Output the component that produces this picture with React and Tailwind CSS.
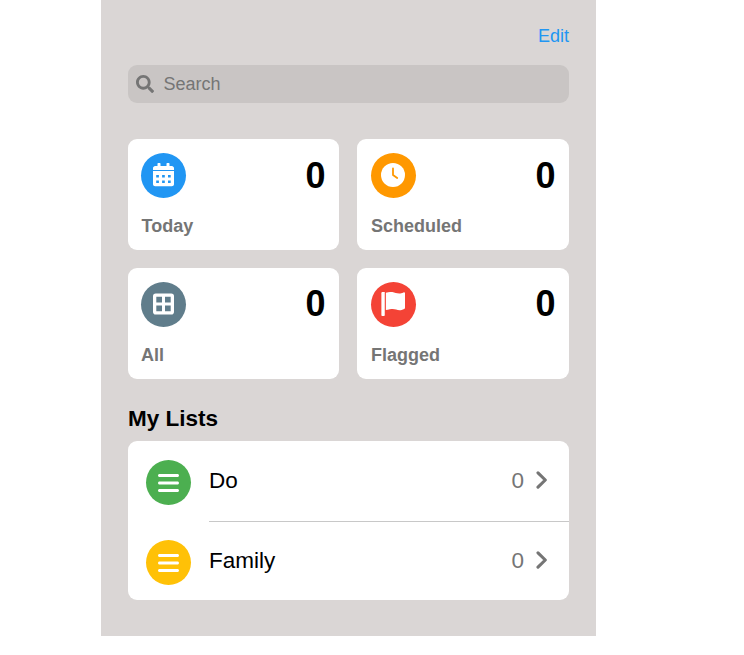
import { FaSearch } from "react-icons/fa";
import { FaBars } from "react-icons/fa6";

function CalendarIcon({ className }) {
  return (
    <svg viewBox="0 0 21 24" fill="currentColor" className={className}>
      <path d="M0 7V5.2C0 4 1 3 2.2 3H4.5V1.1A1.1 1.1 0 0 1 7.5 1.1V3H13.5V1.1A1.1 1.1 0 0 1 16.5 1.1V3H18.8C20 3 21 4 21 5.2V7Z" />
      <path
        fillRule="evenodd"
        d="M0 8H21V21.3C21 22.5 20 23.3 18.8 23.3H2.2C1 23.3 0 22.5 0 21.3ZM3.2 12V14.4H5.9V12ZM9.1 12V14.4H11.8V12ZM15 12V14.4H17.7V12ZM3.2 17.5V20H5.9V17.5ZM9.1 17.5V20H11.8V17.5ZM15 17.5V20H17.7V17.5Z"
      />
    </svg>
  );
}

function ClockIcon({ className }) {
  return (
    <svg viewBox="0 0 24 24" className={className}>
      <circle cx="12" cy="12" r="12" fill="currentColor" />
      <path d="M12 5.5V12L16.2 15" fill="none" stroke="#ff9800" strokeWidth="1.8" strokeLinecap="round" strokeLinejoin="round" />
    </svg>
  );
}

function GridIcon({ className }) {
  return (
    <svg viewBox="0 0 21 24" fill="currentColor" className={className}>
      <path
        fillRule="evenodd"
        d="M2.8 1.5H18.2A2.8 2.8 0 0 1 21 4.3V19.7A2.8 2.8 0 0 1 18.2 22.5H2.8A2.8 2.8 0 0 1 0 19.7V4.3A2.8 2.8 0 0 1 2.8 1.5ZM3.3 4.8V10.5H9V4.8ZM12 4.8V10.5H17.7V4.8ZM3.3 13.5V19.2H9V13.5ZM12 13.5V19.2H17.7V13.5Z"
      />
    </svg>
  );
}

function FlagIcon({ className }) {
  return (
    <svg viewBox="0 0 512 512" fill="currentColor" className={className}>
      <path d="M8 24C8 10 19 0 32 0H80V488C80 501 69 512 56 512H32C19 512 8 501 8 488Z" />
      <path d="M512 24V336C512 347 506 357 496 361C455 381 424 387 397 387C342 387 306 363 250 363C213 363 168 373 104 385V14C160 0 202 -1 235 -1C290 6 330 32 390 32C417 32 445 25 480 9C496 0 512 6 512 24Z" />
    </svg>
  );
}

function ChevronIcon({ className }) {
  return (
    <svg viewBox="0 0 12 18" fill="none" stroke="currentColor" strokeWidth="3.1" strokeLinecap="round" strokeLinejoin="round" className={className}>
      <path d="M2 1.8L9.3 9L2 16.2" />
    </svg>
  );
}

const cards = [
  { label: "Today", color: "bg-[#2196f3]", Icon: CalendarIcon, box: "w-[21px] h-6", pad: "pb-[2px]", lead: "leading-[45px]", indent: "pl-[0.5px]" },
  { label: "Scheduled", color: "bg-[#ff9800]", Icon: ClockIcon, box: "w-6 h-6", pad: "pb-[2px] pr-[1px]", lead: "leading-[45px]", indent: "" },
  { label: "All", color: "bg-[#607d8b]", Icon: GridIcon, box: "w-[21px] h-6", pad: "pb-[2px]", lead: "leading-[43px]", indent: "" },
  { label: "Flagged", color: "bg-[#f44336]", Icon: FlagIcon, box: "w-6 h-6", pad: "pb-[2px] pr-[1px]", lead: "leading-[43px]", indent: "" },
];

const lists = [
  { label: "Do", color: "bg-[#4caf50]" },
  { label: "Family", color: "bg-[#ffc107]" },
];

function Card({ label, color, Icon, box, pad, lead, indent }) {
  return (
    <div className="flex h-[111px] flex-col justify-between rounded-[9px] bg-white pt-[14px] pr-[13.5px] pb-[13px] pl-[13px] even:pl-[14px]">
      <div className="flex justify-between">
        <div className={`flex size-[45px] items-center justify-center rounded-full text-white ${color} ${pad}`}>
          <Icon className={box} />
        </div>
        <span className={`text-[36px] font-bold text-black ${lead}`}>0</span>
      </div>
      <span className={`text-[18px] leading-[21px] font-bold text-[#757575] ${indent}`}>{label}</span>
    </div>
  );
}

function ListRow({ label, color, last }) {
  return (
    <div className={`flex pl-[18px] ${last ? "h-[78px]" : "h-[81px]"}`}>
      <div className={`mr-[18px] flex size-[45px] shrink-0 items-center justify-center rounded-full text-white ${color} ${last ? "mt-[18px]" : "mt-[19px]"}`}>
        <FaBars className="h-6 w-[21px]" />
      </div>
      <div className={`flex flex-1 items-start justify-between pr-[21px] text-[22.5px] leading-[27px] ${last ? "pt-[25px]" : "border-b border-[#c8c8c8] pt-[26px]"}`}>
        <span className="text-black">{label}</span>
        <div className="flex items-start gap-3 text-[#757575]">
          <span>0</span>
          <ChevronIcon className="mt-1 h-[18px] w-3" />
        </div>
      </div>
    </div>
  );
}

export default function App() {
  return (
    <main className="h-[655px] w-[744px] bg-white font-['Liberation_Sans',Arial,sans-serif]">
      <div className="ml-[101px] flex h-[636px] w-[495px] flex-col bg-[#dad6d5] px-[27px] pt-[25px]">
        <a className="self-end text-[18px] leading-[22px] text-[#2196f3]">Edit</a>
        <div className="mt-[18px] flex h-[38px] shrink-0 items-center gap-[9.5px] rounded-[9px] bg-[#c9c5c4] pl-2 text-[18px] text-[#757575]">
          <FaSearch className="size-[18px]" />
          <span>Search</span>
        </div>
        <div className="mt-9 grid grid-cols-[211px_212px] gap-[18px]">
          {cards.map((card) => (
            <Card key={card.label} {...card} />
          ))}
        </div>
        <h2 className="mt-[26px] text-[22.5px] leading-[27px] font-bold text-black">My Lists</h2>
        <div className="mt-[9px] h-[159px] overflow-hidden rounded-[9px] bg-white">
          {lists.map((list, i) => (
            <ListRow key={list.label} {...list} last={i === lists.length - 1} />
          ))}
        </div>
      </div>
    </main>
  );
}
